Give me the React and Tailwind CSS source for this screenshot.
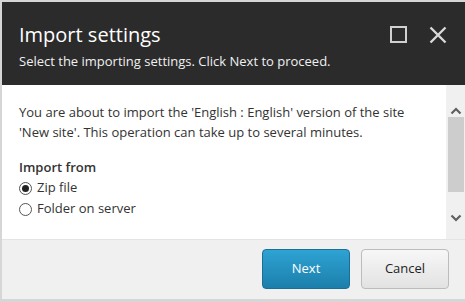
import { useState } from 'react';

export default function App() {
  const [source, setSource] = useState('zip');

  return (
    <div className="w-[465px] h-[302px] overflow-hidden bg-[#d6d6d6] pt-[2px] pl-[2px]" style={{ fontFamily: '"Open Sans", sans-serif' }}>
      <div className="w-[463px] h-[297px] flex flex-col bg-white">
        {/* header */}
        <div className="h-[83px] shrink-0 bg-[#2b2b2b] flex px-[17px] pt-[19px]">
          <div className="flex-1">
            <h1 className="text-[20px] leading-[28px] text-white">Import settings</h1>
            <p className="mt-[3px] text-[13px] leading-[18px] text-[#f0f0f0]">Select the importing settings. Click Next to proceed.</p>
          </div>
          <div className="flex gap-[22px] pt-[5px] pr-[1px]">
            <button className="w-[17px] h-[17px] border-2 border-[#d0d0d0]" />
            <button className="w-[18px] h-[18px]">
              <svg viewBox="0 0 18 18" width="18" height="18">
                <path d="M1.5 1.5 L16.5 16.5 M16.5 1.5 L1.5 16.5" stroke="#d8d8d8" strokeWidth="2.4" fill="none" />
              </svg>
            </button>
          </div>
        </div>

        {/* body */}
        <div className="flex-1 flex min-h-0">
          <div className="flex-1 pl-[17px] pr-[20px] pt-[17px] text-[13px] text-[#333]">
            <p className="leading-[20px]">
              You are about to import the 'English : English' version of the site 'New site'. This operation can take up to several minutes.
            </p>
            <div className="mt-[15px] leading-[20px] font-semibold">Import from</div>
            {[
              ['zip', 'Zip file'],
              ['folder', 'Folder on server'],
            ].map(([key, label]) => (
              <label key={key} className="flex items-center gap-[5px] leading-[21px] cursor-pointer">
                <span className="w-[13px] h-[13px] rounded-full border border-[#555] bg-white flex items-center justify-center mt-[2px]" onClick={() => setSource(key)}>
                  {source === key && <span className="w-[7px] h-[7px] rounded-full bg-[#222]" />}
                </span>
                <span>{label}</span>
              </label>
            ))}
          </div>
          <div className="w-[19px] bg-[#f0f0f0] flex flex-col items-center">
            <svg className="mt-[22px]" viewBox="0 0 12 8" width="12" height="8">
              <path d="M1.5 6.5 L6 2 L10.5 6.5" stroke="#606060" strokeWidth="2.2" fill="none" />
            </svg>
            <div className="mt-[2px] w-[16px] h-[75px] ml-[1px] bg-[#cdcdcd]" />
            <svg className="mt-[22px]" viewBox="0 0 12 8" width="12" height="8">
              <path d="M1.5 1.5 L6 6 L10.5 1.5" stroke="#606060" strokeWidth="2.2" fill="none" />
            </svg>
          </div>
        </div>

        {/* footer */}
        <div className="h-[60px] shrink-0 bg-[#f0f0f0] border-t border-[#e4e4e4] flex justify-end items-start pt-[9px] pr-[16px] gap-[11px]">
          <button className="w-[88px] h-[40px] rounded-[4px] border border-[#1a6f95] bg-gradient-to-b from-[#2ea3d4] to-[#1c7fab] text-white text-[13px]">
            Next
          </button>
          <button className="w-[88px] h-[40px] rounded-[4px] border border-[#bcbcbc] bg-gradient-to-b from-[#f7f7f7] to-[#e2e2e2] text-[#222] text-[13px]">
            Cancel
          </button>
        </div>
      </div>
    </div>
  );
}
